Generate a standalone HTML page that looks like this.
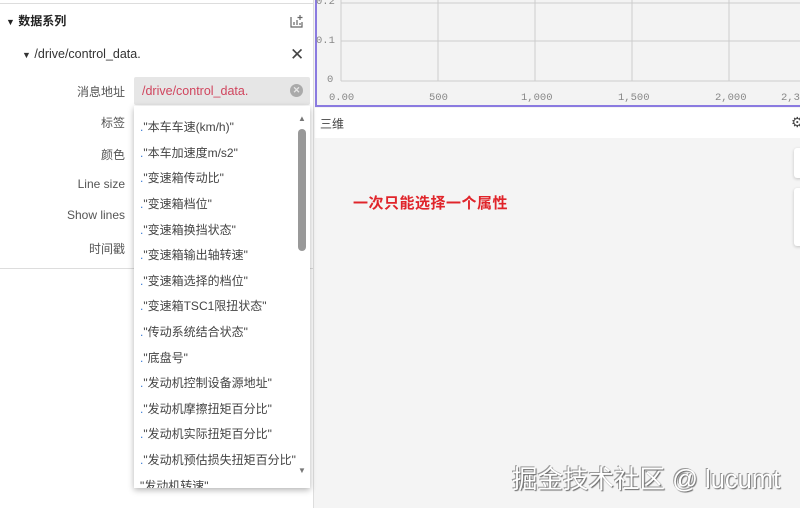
<!DOCTYPE html>
<html><head><meta charset="utf-8"><style>
*{margin:0;padding:0;box-sizing:border-box}
body{width:800px;height:508px;overflow:hidden;background:#f4f4f4;font-family:"Liberation Sans","Noto Sans CJK SC",sans-serif;position:relative}
.abs{position:absolute}
#left{left:0;top:0;width:314px;height:508px;background:#fff;border-right:1px solid #ddd}
.lbl{position:absolute;right:188px;font-size:12px;color:#555;text-align:right;white-space:nowrap}
.mono{font-family:"Liberation Mono",monospace;font-size:10.5px;color:#888}
.item{position:absolute;left:140px;font-size:12px;color:#444;white-space:nowrap}
.item b{color:#3a7bd5;font-weight:normal}
</style></head><body>
<div id="left" class="abs">
 <div class="abs" style="left:0;top:3px;width:313px;height:1px;background:#ddd"></div>
 <div class="abs" style="left:6px;top:12px;font-size:12px;color:#222;font-weight:bold"><span style="font-size:9px">▼</span> 数据系列</div>
 <svg class="abs" style="left:289px;top:13px" width="16" height="16" viewBox="0 0 16 16" fill="none" stroke="#666" stroke-width="1.2"><path d="M2 4v10h11V9M5 12V9M8 12V7M11 12V10M11 2v5M8.5 4.5h5"/></svg>
 <div class="abs" style="left:22px;top:47px;font-size:12.5px;color:#333"><span style="font-size:9px">▼</span> /drive/control_data.</div>
 <div class="abs" style="left:290px;top:45px;font-size:17px;color:#444">✕</div>
 <div class="lbl" style="top:83px">消息地址</div>
 <div class="lbl" style="top:114px">标签</div>
 <div class="lbl" style="top:146px">颜色</div>
 <div class="lbl" style="top:177px">Line size</div>
 <div class="lbl" style="top:208px">Show lines</div>
 <div class="lbl" style="top:240px">时间戳</div>
 <div class="abs" style="left:134px;top:77px;width:176px;height:28px;background:#e6e6e6;border-radius:2px"></div>
 <div class="abs" style="left:142px;top:84px;font-size:12.5px;color:#d0455e">/drive/control_data.</div>
 <div class="abs" style="left:290px;top:84px;width:13px;height:13px;border-radius:50%;background:#aaa;color:#e6e6e6;font-size:9px;line-height:13px;text-align:center;font-weight:bold">✕</div>
 <div class="abs" style="left:0;top:268px;width:313px;height:1px;background:#ddd"></div>
</div>
<div class="abs" style="left:315px;top:0;width:485px;height:107px;background:#f3f3f3;border-left:2px solid #8a7ae0;border-bottom:2px solid #8a7ae0"></div>
<svg class="abs" style="left:317px;top:0" width="483" height="105">
 <g stroke="#ccc" stroke-width="1">
  <line x1="24" y1="3" x2="483" y2="3"/><line x1="24" y1="41" x2="483" y2="41"/><line x1="24" y1="81" x2="483" y2="81"/>
  <line x1="24" y1="0" x2="24" y2="81"/><line x1="121" y1="0" x2="121" y2="81"/><line x1="218" y1="0" x2="218" y2="81"/><line x1="315" y1="0" x2="315" y2="81"/><line x1="412" y1="0" x2="412" y2="81"/>
 </g>
</svg>
<div class="abs mono" style="left:316px;top:-4px">0.2</div>
<div class="abs mono" style="left:316px;top:35px">0.1</div>
<div class="abs mono" style="left:327px;top:74px">0</div>
<div class="abs mono" style="left:329px;top:92px">0.00</div>
<div class="abs mono" style="left:429px;top:92px">500</div>
<div class="abs mono" style="left:521px;top:92px">1,000</div>
<div class="abs mono" style="left:618px;top:92px">1,500</div>
<div class="abs mono" style="left:715px;top:92px">2,000</div>
<div class="abs mono" style="left:781px;top:92px">2,3</div>
<div class="abs" style="left:315px;top:108px;width:485px;height:30px;background:#fff"></div>
<div class="abs" style="left:320px;top:115px;font-size:12px;color:#444">三维</div>
<div class="abs" style="left:791px;top:114px;font-size:14px;color:#444">⚙</div>
<div class="abs" style="left:794px;top:148px;width:10px;height:30px;background:#fff;border-radius:3px;box-shadow:0 1px 3px rgba(0,0,0,.2)"></div>
<div class="abs" style="left:794px;top:188px;width:10px;height:58px;background:#fff;border-radius:3px;box-shadow:0 1px 3px rgba(0,0,0,.2)"></div>
<div class="abs" style="left:353px;top:192px;font-size:15px;font-weight:bold;color:#e0242a;letter-spacing:0.5px">一次只能选择一个属性</div>
<div class="abs" style="left:512px;top:459px;font-size:25.5px;color:#fff;text-shadow:1px 1px 1px #666,-1px -1px 0 #999">掘金技术社区 @ lucumt</div>
<div class="abs" style="left:134px;top:106px;width:176px;height:382px;background:#fff;box-shadow:0 2px 6px rgba(0,0,0,.3);overflow:hidden">
 <div class="abs" style="left:164px;top:8px;font-size:8px;color:#777">▲</div>
 <div class="abs" style="left:164px;top:23px;width:8px;height:122px;background:#999;border-radius:4px"></div>
 <div class="abs" style="left:164px;top:360px;font-size:8px;color:#777">▼</div>
</div>
<div class="item" style="top:118px"><b>.</b>"本车车速(km/h)"</div>
<div class="item" style="top:144px"><b>.</b>"本车加速度m/s2"</div>
<div class="item" style="top:169px"><b>.</b>"变速箱传动比"</div>
<div class="item" style="top:195px"><b>.</b>"变速箱档位"</div>
<div class="item" style="top:221px"><b>.</b>"变速箱换挡状态"</div>
<div class="item" style="top:246px"><b>.</b>"变速箱输出轴转速"</div>
<div class="item" style="top:272px"><b>.</b>"变速箱选择的档位"</div>
<div class="item" style="top:297px"><b>.</b>"变速箱TSC1限扭状态"</div>
<div class="item" style="top:323px"><b>.</b>"传动系统结合状态"</div>
<div class="item" style="top:349px"><b>.</b>"底盘号"</div>
<div class="item" style="top:374px"><b>.</b>"发动机控制设备源地址"</div>
<div class="item" style="top:400px"><b>.</b>"发动机摩擦扭矩百分比"</div>
<div class="item" style="top:425px"><b>.</b>"发动机实际扭矩百分比"</div>
<div class="item" style="top:451px"><b>.</b>"发动机预估损失扭矩百分比"</div>
<div style="position:absolute;left:134px;top:476px;width:160px;height:12px;overflow:hidden"><div class="item" style="left:6px;top:1px">"发动机转速"</div></div>
</body></html>
